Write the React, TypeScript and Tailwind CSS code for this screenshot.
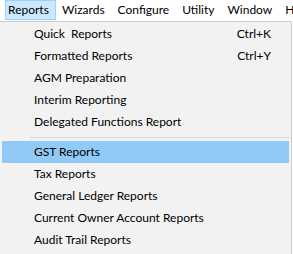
const menus = ['Reports', 'Wizards', 'Configure', 'Utility', 'Window', 'Help']

const items: ({ label: string; shortcut?: string; active?: boolean } | 'sep')[] = [
  { label: 'Quick  Reports', shortcut: 'Ctrl+K' },
  { label: 'Formatted Reports', shortcut: 'Ctrl+Y' },
  { label: 'AGM Preparation' },
  { label: 'Interim Reporting' },
  { label: 'Delegated Functions Report' },
  'sep',
  { label: 'GST Reports', active: true },
  { label: 'Tax Reports' },
  { label: 'General Ledger Reports' },
  { label: 'Current Owner Account Reports' },
  { label: 'Audit Trail Reports' },
]

export default function App() {
  return (
    <div
      className="h-[254px] w-[293px] overflow-hidden bg-white text-[12px] text-black"
      style={{ fontFamily: 'Lato, "Segoe UI", sans-serif' }}
    >
      <div className="flex h-[21px] items-start whitespace-nowrap pl-[5px]">
        {menus.map((m, i) => (
          <div
            key={m}
            className={
              i === 0
                ? 'h-[20px] shrink-0 border border-[#99d1ff] bg-[#cce8ff] pl-[2px] pr-[6px] leading-[18px]'
                : 'h-[20px] shrink-0 border border-transparent pl-[5px] pr-[6px] leading-[18px]'
            }
          >
            {m}
          </div>
        ))}
      </div>
      <div className="h-[233px] w-[292px] border border-b-0 border-l-0 border-[#cccccc] bg-[#f2f2f2] pt-[1px]">
        {items.map((it, i) =>
          it === 'sep' ? (
            <div key={i} className="flex h-[8px] items-center pl-[30px] pr-[2px]">
              <div className="h-px w-full bg-[#d7d7d7]" />
            </div>
          ) : (
            <div
              key={i}
              className={
                'mx-[2px] flex h-[22px] items-center justify-between whitespace-pre pl-[32px] pr-[18px] ' +
                (it.active ? 'bg-[#91c9f7]' : '')
              }
            >
              <span>{it.label}</span>
              {it.shortcut && <span>{it.shortcut}</span>}
            </div>
          ),
        )}
      </div>
    </div>
  )
}
